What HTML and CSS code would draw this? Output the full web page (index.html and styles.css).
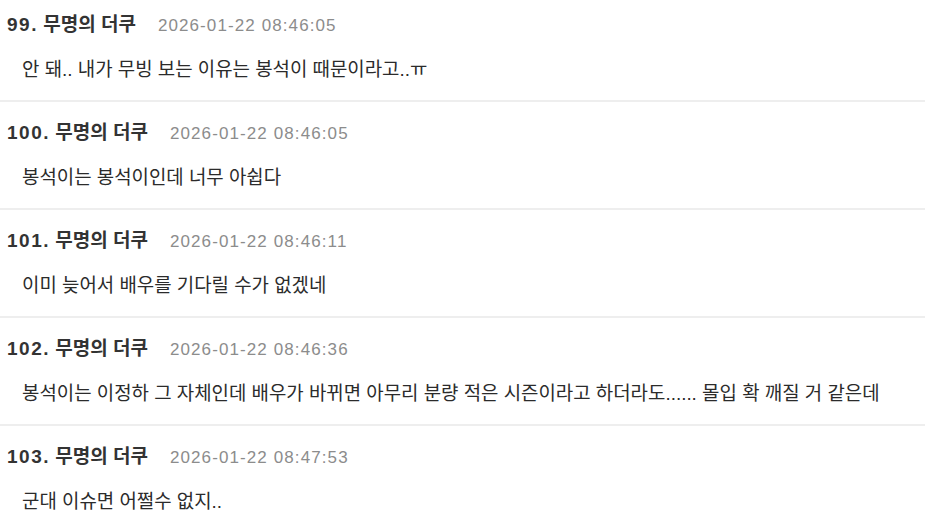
FILE: index.html
```html
<!DOCTYPE html>
<html lang="ko">
<head>
<meta charset="utf-8">
<title>댓글</title>
<link rel="stylesheet" href="styles.css">
</head>
<body>
<ul class="comments">
  <li class="comment">
    <div class="meta"><span class="author"><span class="num">99.</span> 무명의 더쿠</span><span class="date">2026-01-22 08:46:05</span></div>
    <p class="text">안 돼.. 내가 무빙 보는 이유는 봉석이 때문이라고..ㅠ</p>
  </li>
  <li class="comment">
    <div class="meta"><span class="author"><span class="num">100.</span> 무명의 더쿠</span><span class="date">2026-01-22 08:46:05</span></div>
    <p class="text">봉석이는 봉석이인데 너무 아쉽다</p>
  </li>
  <li class="comment">
    <div class="meta"><span class="author"><span class="num">101.</span> 무명의 더쿠</span><span class="date">2026-01-22 08:46:11</span></div>
    <p class="text">이미 늦어서 배우를 기다릴 수가 없겠네</p>
  </li>
  <li class="comment">
    <div class="meta"><span class="author"><span class="num">102.</span> 무명의 더쿠</span><span class="date">2026-01-22 08:46:36</span></div>
    <p class="text">봉석이는 이정하 그 자체인데 배우가 바뀌면 아무리 분량 적은 시즌이라고 하더라도...... 몰입 확 깨질 거 같은데</p>
  </li>
  <li class="comment">
    <div class="meta"><span class="author"><span class="num">103.</span> 무명의 더쿠</span><span class="date">2026-01-22 08:47:53</span></div>
    <p class="text">군대 이슈면 어쩔수 없지..</p>
  </li>
</ul>
</body>
</html>
```
FILE: styles.css
```css
html, body {
  margin: 0;
  padding: 0;
  background: #fff;
}
body {
  font-family: "Liberation Sans", "Noto Sans CJK KR", sans-serif;
  color: #333;
  overflow: hidden;
}
.comments {
  list-style: none;
  margin: -6px 0 0 0;
  padding: 0;
}
.comment {
  padding: 19px 0 17px 0;
  border-bottom: 2px solid #eeeeee;
}
.comment:last-child {
  border-bottom: none;
}
.meta {
  display: flex;
  align-items: baseline;
  gap: 22px;
  padding-left: 7px;
  height: 24px;
  line-height: 24px;
}
.author {
  font-size: 19px;
  font-weight: 700;
  color: #333;
}
.num {
  letter-spacing: 1.5px;
}
.date {
  font-size: 17px;
  letter-spacing: 1.1px;
  color: #8c8c8c;
}
.text {
  margin: 20px 0 0 0;
  padding-left: 22px;
  font-size: 18.9px;
  line-height: 26px;
  color: #2b2b2b;
}
```
